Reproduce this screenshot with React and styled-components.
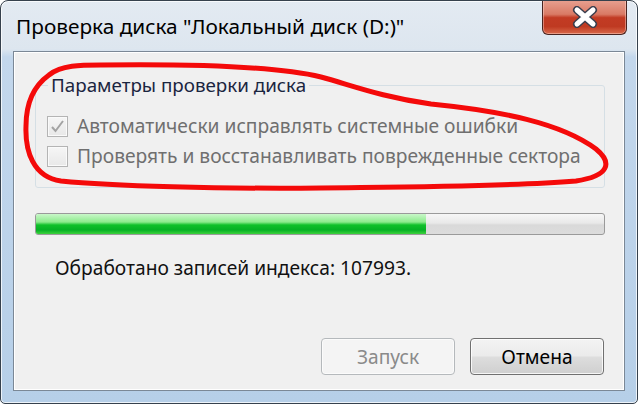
import React from 'react';
import styled, { createGlobalStyle } from 'styled-components';

const GlobalStyle = createGlobalStyle`
	html, body {
		margin: 0;
		background: #fff;
	}
	body {
		font-family: "Noto Sans", "Open Sans", sans-serif;
	}
`;

const Window = styled.div`
	position: relative;
	box-sizing: border-box;
	width: 638px;
	height: 404px;
	display: flex;
	flex-direction: column;
	border: 1px solid #36414d;
	border-radius: 8px 8px 5px 5px;
	background: linear-gradient(
		to bottom,
		#e3eaf2 0,
		#dde6ef 48px,
		#c3d7ec 56px,
		#b6cfe8 100%
	);
	box-shadow: inset 0 0 0 1px rgba(255, 255, 255, 0.75);
	overflow: hidden;
`;

const TitleBar = styled.div`
	height: 50px;
	display: flex;
	align-items: flex-start;
	flex-shrink: 0;
`;

const Title = styled.div`
	padding: 13px 0 0 15px;
	font-size: 20.8px;
	line-height: 24px;
	color: #000;
	white-space: nowrap;
`;

const CloseButton = styled.div`
	margin-left: auto;
	margin-right: 10px;
	margin-top: -1px;
	width: 85px;
	height: 35px;
	box-sizing: border-box;
	display: flex;
	align-items: center;
	justify-content: center;
	border: 1px solid #4a2420;
	border-top: none;
	border-radius: 0 0 6px 6px;
	background: linear-gradient(
		to bottom,
		#e8a191 0%,
		#d97a65 42%,
		#c23b24 52%,
		#bf3a22 78%,
		#d9694a 100%
	);
	box-shadow: inset 0 0 0 1px rgba(255, 220, 210, 0.45);
`;

const Client = styled.div`
	flex: 1;
	display: flex;
	flex-direction: column;
	margin: 0 12px 12px;
	padding: 0 19px 15px 21px;
	border: 1px solid #7b8896;
	background: #f0f0f0;
	box-shadow: inset 0 0 0 1px #fff;
`;

const GroupBox = styled.fieldset`
	margin: 21px 0 0;
	padding: 14px 11px 16px;
	min-width: 0;
	border: 1px solid #d5dfe5;
	border-radius: 3px;
`;

const GroupLabel = styled.legend`
	margin-left: 1px;
	padding: 0 3px;
	font-size: 18.8px;
	line-height: 24px;
	color: #1a2540;
`;

const CheckRow = styled.div`
	display: flex;
	align-items: center;
	height: 30px;
`;

const CheckBox = styled.span`
	flex-shrink: 0;
	width: 21px;
	height: 21px;
	box-sizing: border-box;
	margin-right: 9px;
	display: flex;
	align-items: center;
	justify-content: center;
	border: 1px solid #b4b4b4;
	background: linear-gradient(to bottom, #f6f6f6, #e8e8e8);
	box-shadow: inset 0 0 0 1px #fafafa;
`;

const CheckText = styled.span`
	font-size: 19.2px;
	line-height: 24px;
	color: ${(p) => (p.$disabled ? '#6f6f6f' : '#000')};
	white-space: nowrap;
`;

const Progress = styled.div`
	margin-top: 25px;
	height: 22px;
	box-sizing: border-box;
	border: 1px solid #9a9a9a;
	border-radius: 3px;
	overflow: hidden;
	background: linear-gradient(
		to bottom,
		#f6f6f6 0%,
		#e9e9e9 45%,
		#d9d9d9 55%,
		#dcdcdc 100%
	);
`;

const ProgressFill = styled.div`
	height: 100%;
	background: linear-gradient(
		to bottom,
		#c9f7c9 0%,
		#8deb8d 40%,
		#10c02a 55%,
		#06b025 80%,
		#3dd23d 100%
	);
`;

const Status = styled.div`
	margin: 21px 0 0 20px;
	font-size: 19.2px;
	line-height: 24px;
	color: #111;
	white-space: nowrap;
`;

const ButtonRow = styled.div`
	margin-top: auto;
	display: flex;
	justify-content: flex-end;
	gap: 15px;
	padding-right: 1px;
`;

const Button = styled.div`
	width: 134px;
	height: 37px;
	box-sizing: border-box;
	display: flex;
	align-items: center;
	justify-content: center;
	border-radius: 4px;
	font-size: 19.2px;
	border: 1px solid ${(p) => (p.$disabled ? '#b5b9bc' : '#707070')};
	color: ${(p) => (p.$disabled ? '#8a8a8a' : '#000')};
	background: ${(p) =>
		p.$disabled
			? '#f4f4f4'
			: 'linear-gradient(to bottom, #f3f3f3 0%, #ebebeb 48%, #dddddd 52%, #cfcfcf 100%)'};
	box-shadow: inset 0 0 0 1px
		${(p) => (p.$disabled ? '#fbfbfb' : 'rgba(255,255,255,0.8)')};
`;

const Scribble = styled.svg`
	position: absolute;
	left: 0;
	top: 0;
	pointer-events: none;
`;

function CloseIcon() {
	return (
		<svg width="28" height="22" viewBox="0 0 28 22">
			<path
				d="M6 4 L22 18 M22 4 L6 18"
				stroke="#3b3f4e"
				strokeWidth="8"
				strokeLinecap="round"
				fill="none"
			/>
			<path
				d="M6 4 L22 18 M22 4 L6 18"
				stroke="#fff"
				strokeWidth="5"
				strokeLinecap="round"
				fill="none"
			/>
		</svg>
	);
}

function CheckMark() {
	return (
		<svg width="15" height="15" viewBox="0 0 15 15">
			<path
				d="M2 8 L5.5 12 L13 2"
				stroke="#a3a3a3"
				strokeWidth="2"
				fill="none"
			/>
		</svg>
	);
}

const options = [
	{ text: 'Автоматически исправлять системные ошибки', checked: true },
	{ text: 'Проверять и восстанавливать поврежденные сектора', checked: false },
];

export default function App() {
	const progress = 68.6;
	return (
		<>
			<GlobalStyle />
			<Window>
				<TitleBar>
					<Title>Проверка диска "Локальный диск (D:)"</Title>
					<CloseButton>
						<CloseIcon />
					</CloseButton>
				</TitleBar>
				<Client>
					<GroupBox>
						<GroupLabel>Параметры проверки диска</GroupLabel>
						{options.map((o) => (
							<CheckRow key={o.text}>
								<CheckBox>{o.checked && <CheckMark />}</CheckBox>
								<CheckText $disabled>{o.text}</CheckText>
							</CheckRow>
						))}
					</GroupBox>
					<Progress>
						<ProgressFill style={{ width: `${progress}%` }} />
					</Progress>
					<Status>Обработано записей индекса: 107993.</Status>
					<ButtonRow>
						<Button $disabled>Запуск</Button>
						<Button>Отмена</Button>
					</ButtonRow>
				</Client>
				<Scribble width="638" height="404" viewBox="0 0 638 404">
					<path
						d="M48 74 C60 64, 80 64, 100 64 C180 63, 270 64, 320 76 C350 84, 380 96, 430 103 C500 110, 560 122, 595 148 C612 162, 608 175, 575 180 C500 186, 400 186, 320 187 C220 188, 110 185, 60 180 C32 176, 24 150, 25 125 C25 100, 34 84, 48 74 Z"
						stroke="#f40a0a"
						strokeWidth="5"
						fill="none"
						strokeLinejoin="round"
					/>
				</Scribble>
			</Window>
		</>
	);
}
